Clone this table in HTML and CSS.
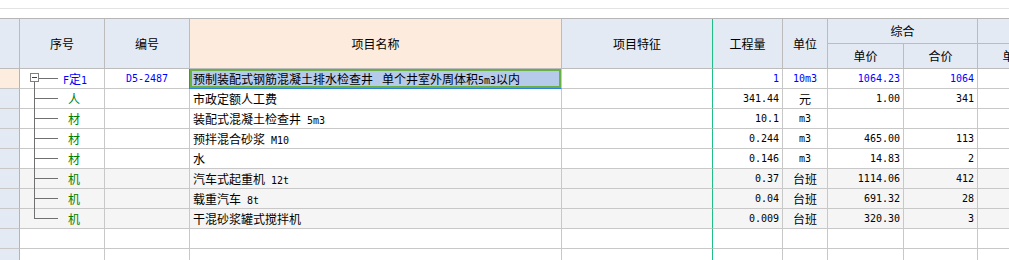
FILE: index.html
```html
<!DOCTYPE html>
<html lang="zh-CN">
<head>
<meta charset="utf-8">
<title>定额组价</title>
<link rel="stylesheet" href="styles.css">
</head>
<body>
<div class="topbar"><div class="topbar-line"></div></div>
<div class="sheet">
  <div class="c h full corner"></div>
  <div class="c h full">序号</div>
  <div class="c h full">编号</div>
  <div class="c h full peach">项目名称</div>
  <div class="c h full feat">项目特征</div>
  <div class="c h full">工程量</div>
  <div class="c h full">单位</div>
  <div class="c h grp">综合</div>
  <div class="c h grp"></div>
  <div class="c h">单价</div>
  <div class="c h">合价</div>
  <div class="c h">单价</div>
  <div class="c h">合价</div>

  <!-- row 1 -->
  <div class="c rh cur"></div>
  <div class="c tree root blue"><span class="box"></span><span class="m">F</span>定<span class="m">1</span></div>
  <div class="c ctr m blue">D5-2487</div>
  <div class="c name sel">预制装配式钢筋混凝土排水检查井<span class="gap"></span>单个井室外周体积<span class="m">5m3</span>以内</div>
  <div class="c feat"></div>
  <div class="c num blue">1</div>
  <div class="c ctr m blue">10m3</div>
  <div class="c num blue">1064.23</div>
  <div class="c num blue">1064</div>
  <div class="c"></div>
  <div class="c"></div>

  <!-- row 2 -->
  <div class="c rh"></div>
  <div class="c tree green">人</div>
  <div class="c"></div>
  <div class="c name">市政定额人工费</div>
  <div class="c feat"></div>
  <div class="c num">341.44</div>
  <div class="c ctr">元</div>
  <div class="c num">1.00</div>
  <div class="c num">341</div>
  <div class="c"></div>
  <div class="c"></div>

  <!-- row 3 -->
  <div class="c rh"></div>
  <div class="c tree green">材</div>
  <div class="c"></div>
  <div class="c name">装配式混凝土检查井<span class="m"> 5m3</span></div>
  <div class="c feat"></div>
  <div class="c num">10.1</div>
  <div class="c ctr m">m3</div>
  <div class="c num"></div>
  <div class="c num"></div>
  <div class="c"></div>
  <div class="c"></div>

  <!-- row 4 -->
  <div class="c rh"></div>
  <div class="c tree green">材</div>
  <div class="c"></div>
  <div class="c name">预拌混合砂浆<span class="m"> M10</span></div>
  <div class="c feat"></div>
  <div class="c num">0.244</div>
  <div class="c ctr m">m3</div>
  <div class="c num">465.00</div>
  <div class="c num">113</div>
  <div class="c"></div>
  <div class="c"></div>

  <!-- row 5 -->
  <div class="c rh"></div>
  <div class="c tree green">材</div>
  <div class="c"></div>
  <div class="c name">水</div>
  <div class="c feat"></div>
  <div class="c num">0.146</div>
  <div class="c ctr m">m3</div>
  <div class="c num">14.83</div>
  <div class="c num">2</div>
  <div class="c"></div>
  <div class="c"></div>

  <!-- row 6 -->
  <div class="c rh"></div>
  <div class="c alt tree green">机</div>
  <div class="c alt"></div>
  <div class="c alt name">汽车式起重机<span class="m"> 12t</span></div>
  <div class="c alt feat"></div>
  <div class="c alt num">0.37</div>
  <div class="c alt ctr">台班</div>
  <div class="c alt num">1114.06</div>
  <div class="c alt num">412</div>
  <div class="c alt"></div>
  <div class="c alt"></div>

  <!-- row 7 -->
  <div class="c rh"></div>
  <div class="c alt tree green">机</div>
  <div class="c alt"></div>
  <div class="c alt name">载重汽车<span class="m"> 8t</span></div>
  <div class="c alt feat"></div>
  <div class="c alt num">0.04</div>
  <div class="c alt ctr">台班</div>
  <div class="c alt num">691.32</div>
  <div class="c alt num">28</div>
  <div class="c alt"></div>
  <div class="c alt"></div>

  <!-- row 8 -->
  <div class="c rh"></div>
  <div class="c alt tree last green">机</div>
  <div class="c alt"></div>
  <div class="c alt name">干混砂浆罐式搅拌机</div>
  <div class="c alt feat"></div>
  <div class="c alt num">0.009</div>
  <div class="c alt ctr">台班</div>
  <div class="c alt num">320.30</div>
  <div class="c alt num">3</div>
  <div class="c alt"></div>
  <div class="c alt"></div>

  <!-- row 9 -->
  <div class="c rh"></div>
  <div class="c"></div>
  <div class="c"></div>
  <div class="c"></div>
  <div class="c feat"></div>
  <div class="c"></div>
  <div class="c"></div>
  <div class="c"></div>
  <div class="c"></div>
  <div class="c"></div>
  <div class="c"></div>

  <!-- row 10 -->
  <div class="c rh"></div>
  <div class="c"></div>
  <div class="c"></div>
  <div class="c"></div>
  <div class="c feat"></div>
  <div class="c"></div>
  <div class="c"></div>
  <div class="c"></div>
  <div class="c"></div>
  <div class="c"></div>
  <div class="c"></div>
</div>
</body>
</html>
```

FILE: styles.css
```css
* {
  box-sizing: border-box;
}

html,
body {
  margin: 0;
  padding: 0;
  background: #ffffff;
  overflow: hidden;
}

body {
  width: 1009px;
  height: 260px;
  font-family: "Noto Sans CJK SC", "Noto Sans", sans-serif;
  font-size: 12px;
  color: #000000;
}

.topbar {
  height: 18px;
  padding-top: 8px;
}

.topbar-line {
  height: 1px;
  background: #e3e3e3;
}

.sheet {
  display: grid;
  grid-template-columns: 20px 85px 85px 372px 151px 70px 45px 76px 74px 74px 74px;
  grid-template-rows: 25px 25px repeat(10, 20px);
  width: max-content;
  border-top: 1px solid #b6b6b6;
}

.c {
  border-right: 1px solid #c8c8c8;
  border-bottom: 1px solid #c8c8c8;
  line-height: 19px;
  white-space: nowrap;
  overflow: hidden;
}

.h {
  background: #e4eaf4;
  border-color: #bcbcbc;
  display: flex;
  align-items: center;
  justify-content: center;
  line-height: 14px;
}

.h.full {
  grid-row: span 2;
}

.h.grp {
  grid-column: span 2;
}

.h.peach {
  background: #fdecdd;
}

.c.feat {
  border-right-color: #1fbf86;
}

.rh {
  background: #e4eaf4;
  border-right-color: #b4b4b4;
}

.rh.cur {
  background: #fdeddf;
}

.alt {
  background: #f5f5f5;
}

.m {
  font-family: "DejaVu Sans Mono", "Liberation Mono", monospace;
  font-size: 10px;
  white-space: pre;
}

.gap {
  display: inline-block;
  width: 9px;
}

.num {
  font-family: "DejaVu Sans Mono", "Liberation Mono", monospace;
  font-size: 10px;
  text-align: right;
  padding-right: 3px;
}

.ctr {
  text-align: center;
}

.name {
  padding-left: 3px;
}

.blue {
  color: #0000ff;
}

.green {
  color: #008000;
}

.sel {
  background: #b6caea;
  border-bottom-color: #2e7fe4;
  box-shadow: inset 0 0 0 2px #69b045, -1px 0 0 #2e7fe4;
  overflow: visible;
}

/* tree column */
.tree {
  position: relative;
  overflow: visible;
  padding-left: 48px;
}

.tree.root {
  padding-left: 43px;
}

.tree::before {
  content: "";
  position: absolute;
  left: 14px;
  top: -1px;
  bottom: -1px;
  width: 1px;
  background: #707070;
}

.tree::after {
  content: "";
  position: absolute;
  left: 14px;
  top: 9px;
  width: 24px;
  height: 1px;
  background: #707070;
}

.tree.root::before {
  top: 13px;
}

.tree.root::after {
  left: 19px;
  width: 19px;
}

.tree.last::before {
  bottom: auto;
  height: 11px;
}

.box {
  position: absolute;
  left: 10px;
  top: 4px;
  width: 9px;
  height: 9px;
  border: 1px solid #808080;
  background: #ffffff;
}

.box::after {
  content: "";
  position: absolute;
  left: 1px;
  top: 3px;
  width: 5px;
  height: 1px;
  background: #404040;
}
```
